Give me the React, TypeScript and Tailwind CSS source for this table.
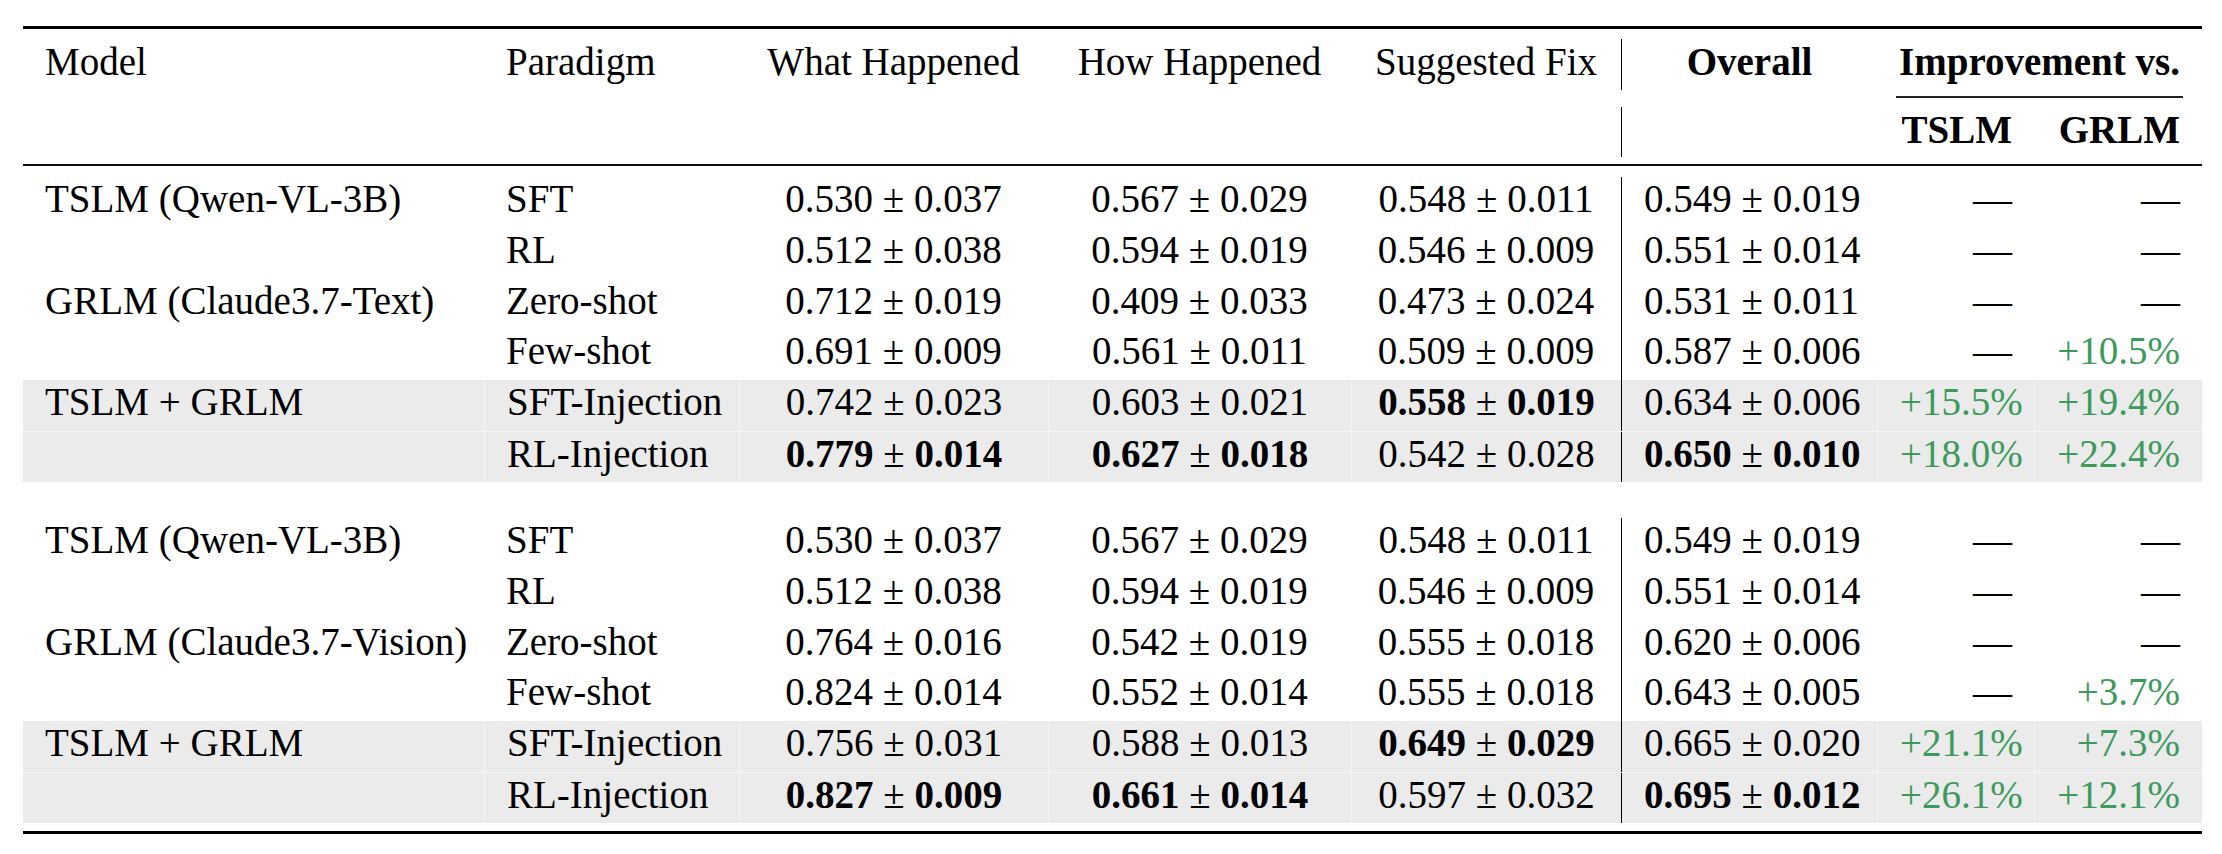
import React from "react";

const COLS = "grid grid-cols-[461px_255px_309px_303px_270px_256px_157px_168px]";

type Cell = [string, boolean];
type Row = {
  model?: string;
  para: string;
  vals: Cell[];
  t: string;
  g: string;
  shade?: boolean;
  seamTop?: boolean;
};

const groupText: Row[] = [
  { model: "TSLM (Qwen-VL-3B)", para: "SFT", vals: [["0.530 ± 0.037", false], ["0.567 ± 0.029", false], ["0.548 ± 0.011", false], ["0.549 ± 0.019", false]], t: "—", g: "—" },
  { para: "RL", vals: [["0.512 ± 0.038", false], ["0.594 ± 0.019", false], ["0.546 ± 0.009", false], ["0.551 ± 0.014", false]], t: "—", g: "—" },
  { model: "GRLM (Claude3.7-Text)", para: "Zero-shot", vals: [["0.712 ± 0.019", false], ["0.409 ± 0.033", false], ["0.473 ± 0.024", false], ["0.531 ± 0.011", false]], t: "—", g: "—" },
  { para: "Few-shot", vals: [["0.691 ± 0.009", false], ["0.561 ± 0.011", false], ["0.509 ± 0.009", false], ["0.587 ± 0.006", false]], t: "—", g: "+10.5%" },
  { model: "TSLM + GRLM", para: "SFT-Injection", vals: [["0.742 ± 0.023", false], ["0.603 ± 0.021", false], ["0.558 ± 0.019", true], ["0.634 ± 0.006", false]], t: "+15.5%", g: "+19.4%", shade: true },
  { para: "RL-Injection", vals: [["0.779 ± 0.014", true], ["0.627 ± 0.018", true], ["0.542 ± 0.028", false], ["0.650 ± 0.010", true]], t: "+18.0%", g: "+22.4%", shade: true, seamTop: true },
];

const groupVision: Row[] = [
  { model: "TSLM (Qwen-VL-3B)", para: "SFT", vals: [["0.530 ± 0.037", false], ["0.567 ± 0.029", false], ["0.548 ± 0.011", false], ["0.549 ± 0.019", false]], t: "—", g: "—" },
  { para: "RL", vals: [["0.512 ± 0.038", false], ["0.594 ± 0.019", false], ["0.546 ± 0.009", false], ["0.551 ± 0.014", false]], t: "—", g: "—" },
  { model: "GRLM (Claude3.7-Vision)", para: "Zero-shot", vals: [["0.764 ± 0.016", false], ["0.542 ± 0.019", false], ["0.555 ± 0.018", false], ["0.620 ± 0.006", false]], t: "—", g: "—" },
  { para: "Few-shot", vals: [["0.824 ± 0.014", false], ["0.552 ± 0.014", false], ["0.555 ± 0.018", false], ["0.643 ± 0.005", false]], t: "—", g: "+3.7%" },
  { model: "TSLM + GRLM", para: "SFT-Injection", vals: [["0.756 ± 0.031", false], ["0.588 ± 0.013", false], ["0.649 ± 0.029", true], ["0.665 ± 0.020", false]], t: "+21.1%", g: "+7.3%", shade: true },
  { para: "RL-Injection", vals: [["0.827 ± 0.009", true], ["0.661 ± 0.014", true], ["0.597 ± 0.032", false], ["0.695 ± 0.012", true]], t: "+26.1%", g: "+12.1%", shade: true, seamTop: true },
];

function Val({ cell }: { cell: Cell }) {
  const [v, bold] = cell;
  if (!bold) return <>{v}</>;
  const [a, b] = v.split(" ± ");
  return (
    <>
      <b className="font-bold">{a}</b> ± <b className="font-bold">{b}</b>
    </>
  );
}

function Gain({ v }: { v: string }) {
  return v === "—" ? <span>—</span> : <span className="text-[#3d9a5b]">{v}</span>;
}

function DataRow({ r }: { r: Row }) {
  const seam = r.shade ? "border-l border-[#f5f5f5]" : "";
  return (
    <div
      className={`${COLS} h-[50.83px] ${r.shade ? "bg-[#ebebeb]" : ""} ${
        r.seamTop ? "border-t border-[#f5f5f5]" : ""
      }`}
    >
      <div className="whitespace-nowrap px-[22px]">{r.model ?? ""}</div>
      <div className={`whitespace-nowrap px-[22px] ${seam}`}>{r.para}</div>
      <div className={`whitespace-nowrap px-[22px] text-center ${seam}`}>
        <Val cell={r.vals[0]} />
      </div>
      <div className={`whitespace-nowrap px-[22px] text-center ${seam}`}>
        <Val cell={r.vals[1]} />
      </div>
      <div className={`whitespace-nowrap px-[22px] text-center ${seam}`}>
        <Val cell={r.vals[2]} />
      </div>
      <div className="whitespace-nowrap border-l border-black px-[22px] text-center">
        <Val cell={r.vals[3]} />
      </div>
      <div className={`whitespace-nowrap px-[22px] text-right ${seam}`}>
        <Gain v={r.t} />
      </div>
      <div className={`whitespace-nowrap px-[22px] text-right ${seam}`}>
        <Gain v={r.g} />
      </div>
    </div>
  );
}

export default function App() {
  return (
    <div className="min-h-screen bg-white pt-[26px] font-['Liberation_Serif','Times_New_Roman',serif] text-[39px] leading-[44px] text-black">
      <div className="ml-[23px] w-[2179px]">
        {/* toprule */}
        <div className="h-[3px] bg-black" />

        {/* header row 1 */}
        <div className={`${COLS} h-[67px]`}>
          <div className="px-[22px] pt-[11px]">Model</div>
          <div className="px-[22px] pt-[11px]">Paradigm</div>
          <div className="whitespace-nowrap px-[22px] pt-[11px] text-center">What Happened</div>
          <div className="whitespace-nowrap px-[22px] pt-[11px] text-center">How Happened</div>
          <div className="whitespace-nowrap px-[22px] pt-[11px] text-center">Suggested Fix</div>
          <div className="flex">
            <div className="mb-[6px] mt-[10px] w-px bg-black" />
            <div className="flex-1 px-[22px] pt-[11px] text-center font-bold">Overall</div>
          </div>
          <div className="col-span-2 whitespace-nowrap px-[22px] pt-[11px] text-center font-bold">
            Improvement vs.
          </div>
        </div>

        {/* cmidrule */}
        <div className={`${COLS} h-[2px]`}>
          <div className="col-span-2 col-start-7 px-[19px]">
            <div className="h-[1.5px] bg-[#222]" />
          </div>
        </div>

        {/* header row 2 */}
        <div className={`${COLS} h-[66px]`}>
          <div className="col-span-5" />
          <div className="flex">
            <div className="mb-[7px] mt-[9px] w-px bg-black" />
            <div className="flex-1" />
          </div>
          <div className="px-[22px] pt-[10px] text-right font-bold">TSLM</div>
          <div className="px-[22px] pt-[10px] text-right font-bold">GRLM</div>
        </div>

        {/* midrule */}
        <div className="h-[2px] bg-[#111]" />
        <div className="h-[11px]" />

        {groupText.map((r, i) => (
          <DataRow key={`a${i}`} r={r} />
        ))}

        <div className="h-[36px]" />

        {groupVision.map((r, i) => (
          <DataRow key={`b${i}`} r={r} />
        ))}

        <div className="h-[8px]" />
        {/* bottomrule */}
        <div className="h-[3px] bg-black" />
      </div>
    </div>
  );
}
